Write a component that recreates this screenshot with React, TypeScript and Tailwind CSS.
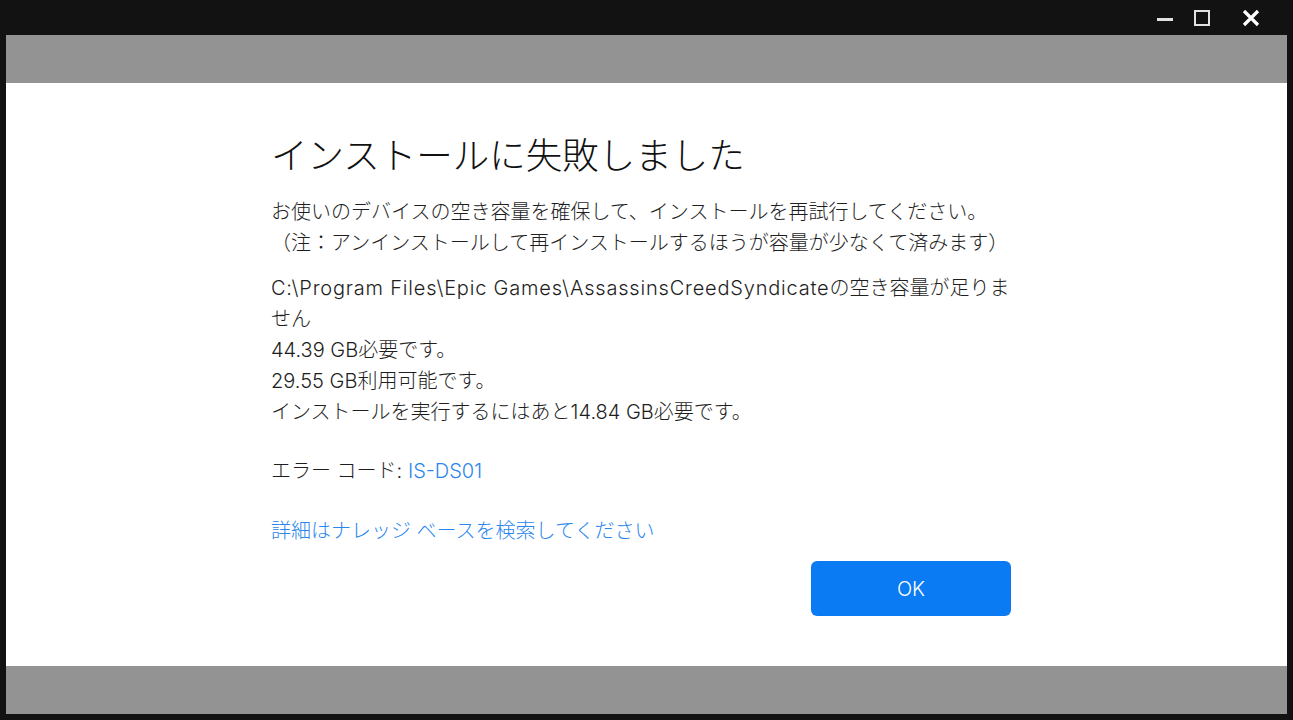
export default function App() {
  const font = { fontFamily: 'Inter, "Noto Sans CJK JP", sans-serif' }
  return (
    <div className="flex h-[720px] w-[1293px] flex-col bg-[#121212]" style={font}>
      {/* Title bar */}
      <div className="flex h-[35px] shrink-0 items-center justify-end">
        <div className="mr-[21px] mt-[4px] h-[3px] w-[16px] bg-[#e2e2e2]" />
        <div className="mr-[32px] h-[16px] w-[16px] border-2 border-[#e2e2e2]" />
        <svg className="mr-[33px]" width="18" height="18" viewBox="0 0 18 18">
          <path d="M2 2 L16 16 M16 2 L2 16" stroke="#ffffff" strokeWidth="3.2" />
        </svg>
      </div>

      <div className="flex flex-1 flex-col px-[6px] pb-[6px]">
        <div className="h-[48px] bg-[#939393]" />

        <div className="flex-1 bg-white">
          <div className="ml-[265px] w-[740px] pt-[48px] text-[#1e1e1e]">
            <h1 className="text-[36.5px] font-light leading-[50px] text-[#111111]">
              インストールに失敗しました
            </h1>

            <div className="mt-[16px] text-[20px] font-light leading-[31px]">
              <p>お使いのデバイスの空き容量を確保して、インストールを再試行してください。</p>
              <p>（注：アンインストールして再インストールするほうが容量が少なくて済みます）</p>
            </div>

            <div className="mt-[14px] text-[20px] font-light leading-[31px]">
              <p>
                <span className="tracking-[0.8px]">C:\Program Files\Epic Games\AssassinsCreedSyndicate</span>
                の空き容量が足りません
              </p>
              <p>44.39 GB必要です。</p>
              <p>29.55 GB利用可能です。</p>
              <p>インストールを実行するにはあと14.84 GB必要です。</p>
            </div>

            <p className="mt-[28px] text-[20px] font-light leading-[31px]">
              エラー コード: <span className="text-[#2a86ee]">IS-DS01</span>
            </p>

            <p className="mt-[29px] text-[20px] font-light leading-[31px] text-[#2a86ee]">
              詳細はナレッジ ベースを検索してください
            </p>

            <div className="mt-[14px] flex justify-end">
              <button className="flex h-[55px] w-[200px] items-center justify-center rounded-[6px] bg-[#0a7bf2] text-[20px] font-light text-white">
                OK
              </button>
            </div>
          </div>
        </div>

        <div className="h-[48px] bg-[#939393]" />
      </div>
    </div>
  )
}
